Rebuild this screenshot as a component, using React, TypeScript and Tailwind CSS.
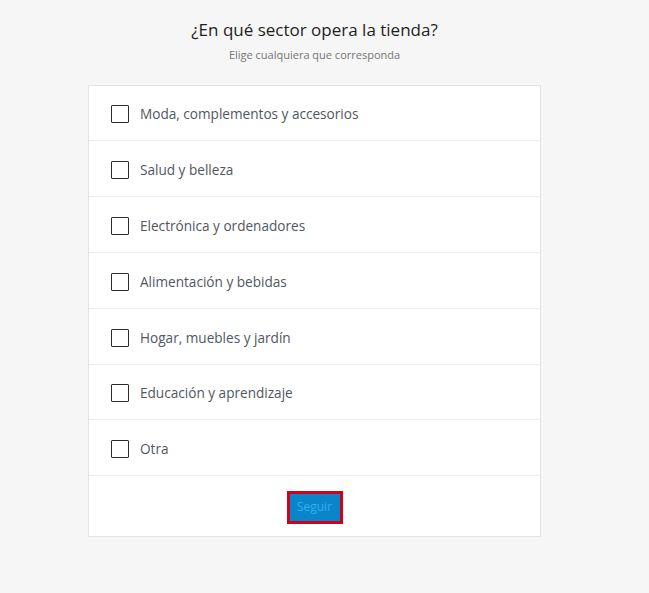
import React from "react";

const items = [
  "Moda, complementos y accesorios",
  "Salud y belleza",
  "Electrónica y ordenadores",
  "Alimentación y bebidas",
  "Hogar, muebles y jardín",
  "Educación y aprendizaje",
  "Otra",
];

export default function App() {
  return (
    <div
      className="min-h-[593px] w-full bg-[#f6f6f6]"
      style={{ fontFamily: '"Open Sans", "Noto Sans", sans-serif' }}
    >
      <div className="flex w-[629px] flex-col items-center pt-[17px]">
        <h1 className="text-[17px] leading-[26px] text-[#1e1e1e]">¿En qué sector opera la tienda?</h1>
        <p className="mt-[4px] text-[11px] leading-[16px] text-[#757575]">Elige cualquiera que corresponda</p>
        <div className="mt-[22px] w-[453px] border border-[#e2e4e7] bg-white">
          {items.map((t, i) => (
            <label
              key={t}
              className={`flex items-center border-b border-[#eeeeee] pl-[22px] ${
                i === 0 || i === 5 ? "h-[55px]" : "h-[56px]"
              }`}
            >
              <span className="mt-[2px] h-[18px] w-[18px] shrink-0 rounded-[1px] border-[1.5px] border-[#2b2b2b] bg-white" />
              <span className="ml-[11px] mt-[3px] text-[13.6px] text-[#50575e]">{t}</span>
            </label>
          ))}
          <div className="flex h-[60px] items-center justify-center">
            <button className="mt-[3px] h-[33px] w-[56px] border-[3px] border-[#d0021b] bg-[#0a85c9] pb-[1px] text-[12px] text-[#2eb2f0]">
              Seguir
            </button>
          </div>
        </div>
      </div>
    </div>
  );
}
